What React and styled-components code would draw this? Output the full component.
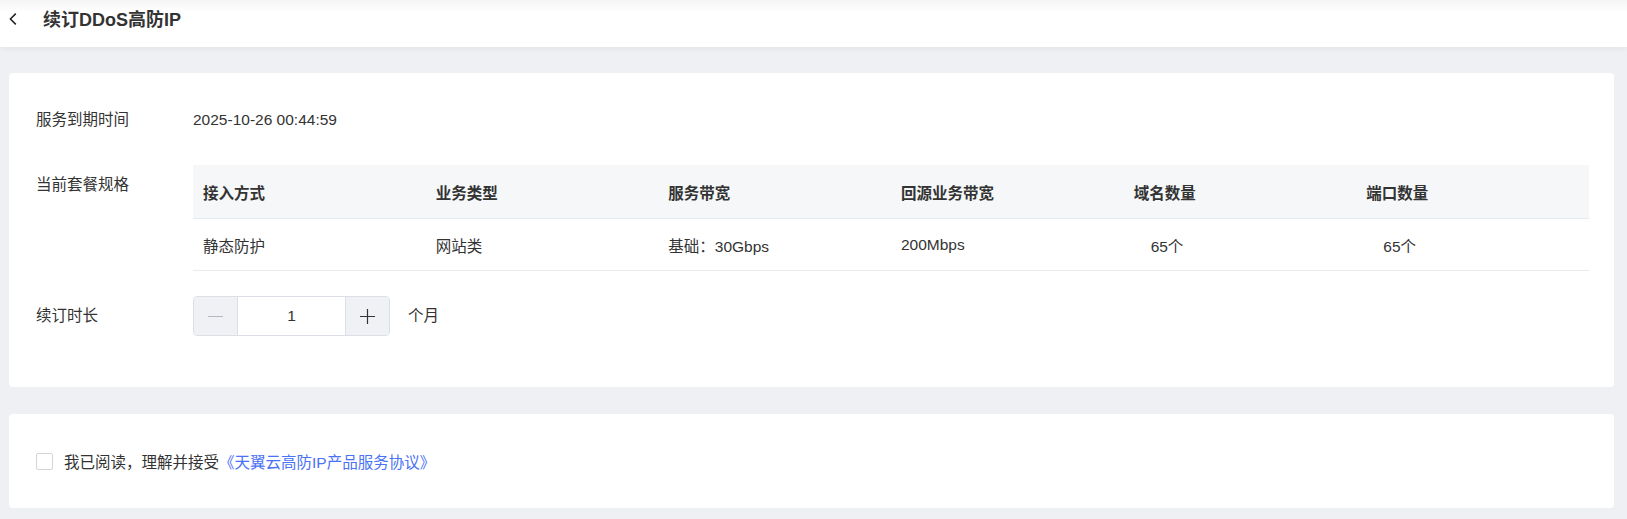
import React from "react";
import styled, { createGlobalStyle } from "styled-components";

const GlobalStyle = createGlobalStyle`
  body {
    margin: 0;
    background: #eef0f4;
    font-family: "Liberation Sans", "Noto Sans CJK SC", sans-serif;
    font-size: 15.5px;
    color: #333;
  }
`;

const columns = [
  { title: "接入方式", value: "静态防护" },
  { title: "业务类型", value: "网站类" },
  { title: "服务带宽", value: "基础：30Gbps" },
  { title: "回源业务带宽", value: "200Mbps" },
  { title: "域名数量", value: "65个", center: true },
  { title: "端口数量", value: "65个", center: true },
];

function App() {
  return (
    <Page>
      <GlobalStyle />
      <Header>
        <BackButton aria-label="返回">
          <svg width="8" height="12" viewBox="0 0 8 12" fill="none">
            <path d="M6.8 0.6L1.4 6l5.4 5.4" stroke="#222" strokeWidth="1.5" />
          </svg>
        </BackButton>
        <Title>续订DDoS高防IP</Title>
      </Header>
      <Main>
        <Card>
          <FormRow>
            <Label>服务到期时间</Label>
            <Value>2025-10-26 00:44:59</Value>
          </FormRow>
          <FormRow>
            <Label>当前套餐规格</Label>
            <TableWrap>
              <Table>
                <thead>
                  <tr>
                    {columns.map((c) => (
                      <Th key={c.title}>{c.title}</Th>
                    ))}
                  </tr>
                </thead>
                <tbody>
                  <tr>
                    {columns.map((c) => (
                      <Td key={c.title} $center={c.center}>
                        {c.value}
                      </Td>
                    ))}
                  </tr>
                </tbody>
              </Table>
            </TableWrap>
          </FormRow>
          <FormRow>
            <Label>续订时长</Label>
            <Stepper>
              <StepButton aria-label="减少">
                <svg width="15" height="15" viewBox="0 0 15 15">
                  <path d="M0 7.5h15" stroke="#b4b8bf" strokeWidth="1.2" />
                </svg>
              </StepButton>
              <StepInput>1</StepInput>
              <StepButton aria-label="增加">
                <svg width="15" height="15" viewBox="0 0 15 15">
                  <path d="M0 7.5h15M7.5 0v15" stroke="#333" strokeWidth="1.2" />
                </svg>
              </StepButton>
            </Stepper>
            <Unit>个月</Unit>
          </FormRow>
        </Card>
        <AgreeCard>
          <Checkbox />
          <AgreeText>
            我已阅读，理解并接受<Link>《天翼云高防IP产品服务协议》</Link>
          </AgreeText>
        </AgreeCard>
      </Main>
    </Page>
  );
}

const Page = styled.div`
  min-height: 519px;
  display: flex;
  flex-direction: column;
`;

const Header = styled.div`
  height: 47px;
  display: flex;
  align-items: flex-start;
  padding-top: 8px;
  box-sizing: border-box;
  background: linear-gradient(#f5f5f6 0, #fff 12px);
  box-shadow: 0 2px 6px rgba(0, 0, 0, 0.05);
  position: relative;
  z-index: 1;
`;

const BackButton = styled.div`
  width: 43px;
  height: 24px;
  display: flex;
  align-items: flex-start;
  padding: 5px 0 0 9px;
  box-sizing: border-box;
`;

const Title = styled.h1`
  margin: 0;
  font-size: 18px;
  line-height: 24px;
  font-weight: 700;
  color: #333;
`;

const Main = styled.div`
  display: flex;
  flex-direction: column;
  gap: 27px;
  padding: 26px 13px 0 9px;
`;

const Card = styled.div`
  background: #fff;
  border-radius: 4px;
  padding: 27px 25px 51px 27px;
  display: flex;
  flex-direction: column;
  gap: 25px;
`;

const FormRow = styled.div`
  display: flex;
  align-items: flex-start;
  min-height: 40px;
`;

const Label = styled.div`
  width: 157px;
  flex-shrink: 0;
  line-height: 40px;
  color: #333;
`;

const Value = styled.div`
  line-height: 40px;
  color: #333;
`;

const TableWrap = styled.div`
  flex: 1;
`;

const Table = styled.table`
  width: 100%;
  border-collapse: collapse;
  table-layout: fixed;
`;

const Th = styled.th`
  height: 53px;
  padding: 0 10px;
  background: #f6f7f9;
  border-bottom: 1px solid #e6e9ef;
  text-align: left;
  font-weight: 700;
  color: #333;
`;

const Td = styled.td`
  height: 51px;
  padding: ${(p) => (p.$center ? "0 0 0 27px" : "0 10px")};
  border-bottom: 1px solid #e9ebef;
  color: #333;
`;

const Stepper = styled.div`
  display: flex;
  height: 40px;
  border: 1px solid #dcdfe6;
  border-radius: 4px;
  box-sizing: border-box;
  overflow: hidden;
`;

const StepButton = styled.div`
  width: 43px;
  display: flex;
  align-items: center;
  justify-content: center;
  background: #f0f1f4;
`;

const StepInput = styled.div`
  width: 107px;
  display: flex;
  align-items: center;
  justify-content: center;
  border-left: 1px solid #dcdfe6;
  border-right: 1px solid #dcdfe6;
  color: #333;
`;

const Unit = styled.div`
  line-height: 40px;
  margin-left: 18px;
  color: #333;
`;

const AgreeCard = styled.div`
  background: #fff;
  border-radius: 4px;
  height: 94px;
  display: flex;
  align-items: center;
  padding: 0 27px;
  box-sizing: border-box;
`;

const Checkbox = styled.span`
  width: 17px;
  height: 17px;
  border: 1px solid #d3d5da;
  border-radius: 2px;
  box-sizing: border-box;
  margin-right: 11px;
  background: #fff;
`;

const AgreeText = styled.span`
  color: #333;
`;

const Link = styled.a`
  color: #4a72f5;
  cursor: pointer;
`;

export default App;
